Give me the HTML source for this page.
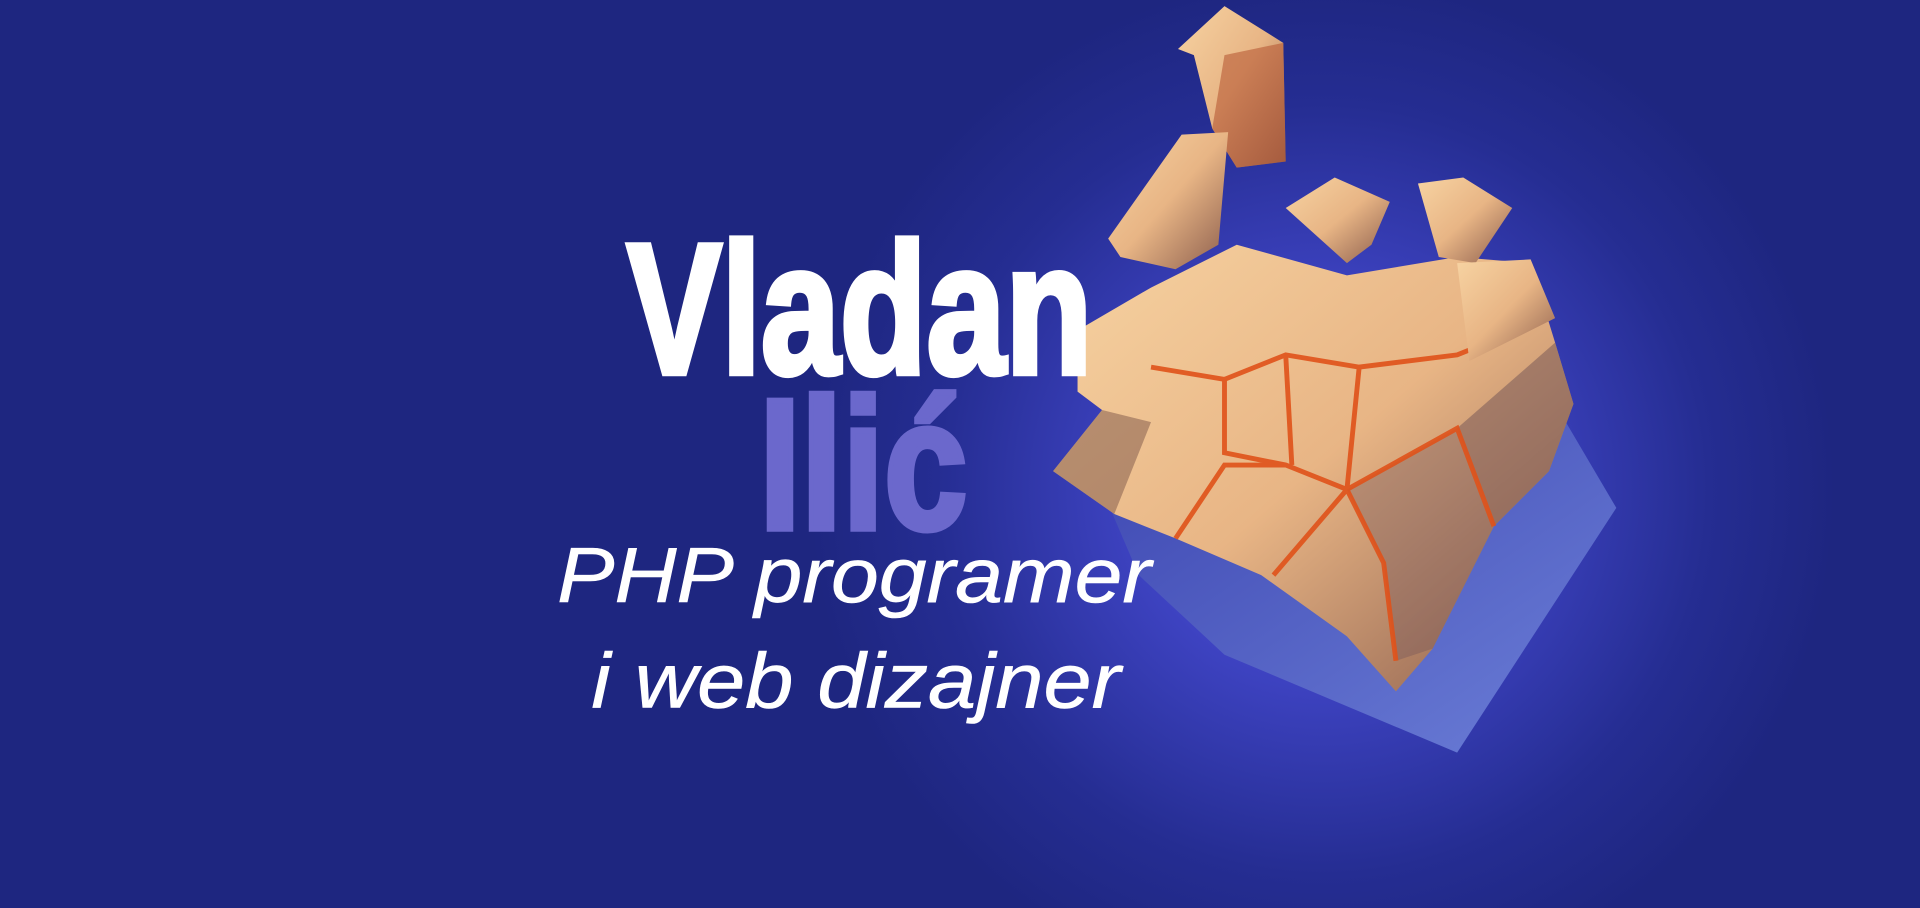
<!DOCTYPE html>
<html><head><meta charset="utf-8"><style>
html,body{margin:0;padding:0;width:1920px;height:908px;overflow:hidden;background:#1e2680}
svg{display:block}
</style></head><body>
<svg width="1920" height="908" viewBox="0 0 1568 742" preserveAspectRatio="none" xmlns="http://www.w3.org/2000/svg">
<defs>
<radialGradient id="glow" cx="1080" cy="400" r="420" gradientUnits="userSpaceOnUse">
<stop offset="0" stop-color="#5558e6"/><stop offset="0.35" stop-color="#3f44c4"/><stop offset="0.75" stop-color="#252d92"/><stop offset="1" stop-color="#1e2680"/>
</radialGradient>
<linearGradient id="gold" x1="0" y1="0" x2="1" y2="1">
<stop offset="0" stop-color="#f7d3a2"/><stop offset="0.5" stop-color="#e8b585"/><stop offset="1" stop-color="#8a5c4c"/>
</linearGradient>
<linearGradient id="blue" x1="0" y1="0" x2="1" y2="1">
<stop offset="0" stop-color="#3c45b0"/><stop offset="1" stop-color="#6c7fd8"/>
</linearGradient>
</defs>
<rect width="1568" height="742" fill="#1e2680"/>
<rect width="1568" height="742" fill="url(#glow)"/>
<polygon points="900,400 1270,330 1320,415 1190,615 1000,535 930,470" fill="url(#blue)"/>
<polygon points="880,270 940,235 1010,200 1100,225 1190,210 1250,215 1270,280 1285,330 1265,385 1220,430 1170,530 1140,565 1100,520 1030,470 960,440 910,420 860,385 900,335 880,320" fill="url(#gold)"/>
<polygon points="1190,350 1270,280 1285,330 1265,385 1220,430" fill="#7a5a58" opacity="0.55"/>
<polygon points="1100,400 1130,460 1140,540 1170,530 1220,430 1190,350" fill="#6e5058" opacity="0.35"/>
<polygon points="860,385 900,335 940,345 910,420" fill="#6e4a40" opacity="0.45"/>
<g stroke="#e0521a" stroke-width="4" fill="none" opacity="0.9">
<path d="M940,300 L1000,310 L1050,290 L1110,300 L1190,290 L1240,270"/>
<path d="M1000,310 L1000,370 L1050,380 L1100,400 L1130,460 L1140,540"/>
<path d="M1050,290 L1055,380 M1110,300 L1100,400 L1190,350 L1220,430"/>
<path d="M960,440 L1000,380 L1050,380 M1100,400 L1040,470"/>
</g>
<polygon points="962,40 1000,5 1048,35 1050,132 1010,137 990,105 975,45" fill="url(#gold)"/>
<polygon points="990,105 1010,137 1050,132 1048,35 1000,45" fill="#b85a35" opacity="0.6"/>
<polygon points="905,195 965,110 1003,108 995,200 960,220 915,210" fill="url(#gold)"/>
<polygon points="1050,170 1090,145 1135,165 1120,200 1100,215" fill="url(#gold)"/>
<polygon points="1158,150 1195,145 1235,170 1205,215 1175,210" fill="url(#gold)"/>
<polygon points="1190,215 1250,212 1270,260 1200,295" fill="url(#gold)"/>
<text x="512" y="305" font-family="Liberation Sans, sans-serif" font-weight="bold" font-size="152" fill="#fff" stroke="#fff" stroke-width="5" textLength="380" lengthAdjust="spacingAndGlyphs">Vladan</text>
<text x="620" y="432" font-family="Liberation Sans, sans-serif" font-weight="bold" font-size="152" fill="#6b68cc" stroke="#6b68cc" stroke-width="5" textLength="170" lengthAdjust="spacingAndGlyphs">Ilić</text>
<text x="455" y="492" font-family="Liberation Sans, sans-serif" font-style="italic" font-size="64" fill="#fff" stroke="#fff" stroke-width="0.5" textLength="485" lengthAdjust="spacingAndGlyphs">PHP programer</text>
<text x="483" y="578" font-family="Liberation Sans, sans-serif" font-style="italic" font-size="64" fill="#fff" stroke="#fff" stroke-width="0.5" textLength="432" lengthAdjust="spacingAndGlyphs">i web dizajner</text>
</svg>
</body></html>
